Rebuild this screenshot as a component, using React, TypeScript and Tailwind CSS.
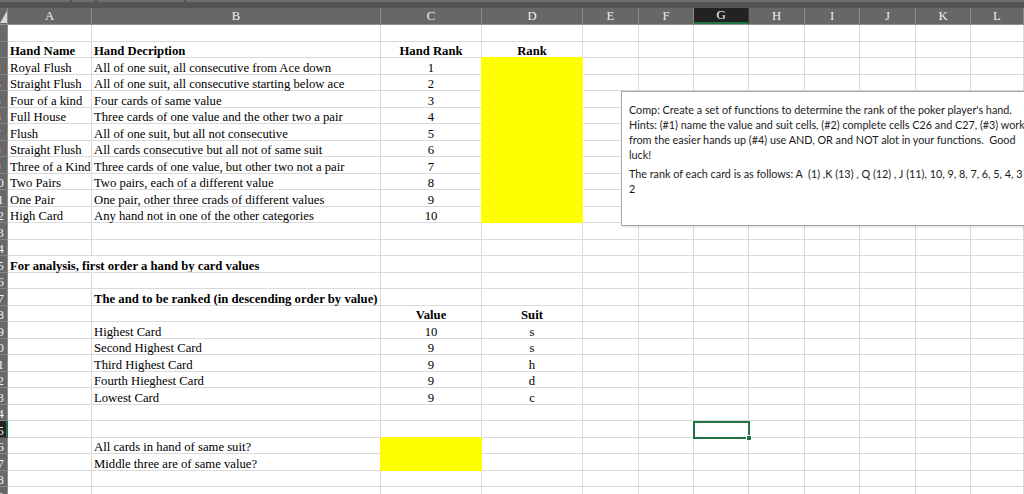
import React from 'react';

type Cell = { t?: string; b?: boolean; c?: boolean; y?: boolean; o?: boolean };

const letters = ['A', 'B', 'C', 'D', 'E', 'F', 'G', 'H', 'I', 'J', 'K', 'L'];
const colW = [
  'w-[84px]',
  'w-[289px]',
  'w-[101px]',
  'w-[101px]',
  'w-[56px]',
  'w-[55px]',
  'w-[55px]',
  'w-[56px]',
  'w-[55px]',
  'w-[56px]',
  'w-[55px]',
  'flex-1',
];

const data: Record<number, Record<number, Cell>> = {
  2: {
    0: { t: 'Hand Name', b: true },
    1: { t: 'Hand Decription', b: true },
    2: { t: 'Hand Rank', b: true, c: true },
    3: { t: 'Rank', b: true, c: true },
  },
  3: { 0: { t: 'Royal Flush' }, 1: { t: 'All of one suit, all consecutive from Ace down' }, 2: { t: '1', c: true }, 3: { y: true } },
  4: { 0: { t: 'Straight Flush' }, 1: { t: 'All of one suit, all consecutive starting below ace' }, 2: { t: '2', c: true }, 3: { y: true } },
  5: { 0: { t: 'Four of a kind' }, 1: { t: 'Four cards of same value' }, 2: { t: '3', c: true }, 3: { y: true } },
  6: { 0: { t: 'Full House' }, 1: { t: 'Three cards of one value and the other two a pair' }, 2: { t: '4', c: true }, 3: { y: true } },
  7: { 0: { t: 'Flush' }, 1: { t: 'All of one suit, but all not consecutive' }, 2: { t: '5', c: true }, 3: { y: true } },
  8: { 0: { t: 'Straight Flush' }, 1: { t: 'All cards consecutive but all not of same suit' }, 2: { t: '6', c: true }, 3: { y: true } },
  9: { 0: { t: 'Three of a Kind' }, 1: { t: 'Three cards of one value, but other two not a pair' }, 2: { t: '7', c: true }, 3: { y: true } },
  10: { 0: { t: 'Two Pairs' }, 1: { t: 'Two pairs, each of a different value' }, 2: { t: '8', c: true }, 3: { y: true } },
  11: { 0: { t: 'One Pair' }, 1: { t: 'One pair, other three crads of different values' }, 2: { t: '9', c: true }, 3: { y: true } },
  12: { 0: { t: 'High Card' }, 1: { t: 'Any hand not in one of the other categories' }, 2: { t: '10', c: true }, 3: { y: true } },
  15: { 0: { t: 'For analysis, first order a hand by card values', b: true, o: true } },
  17: { 1: { t: 'The and to be ranked (in descending order by value)', b: true } },
  18: { 2: { t: 'Value', b: true, c: true }, 3: { t: 'Suit', b: true, c: true } },
  19: { 1: { t: 'Highest Card' }, 2: { t: '10', c: true }, 3: { t: 's', c: true } },
  20: { 1: { t: 'Second Highest Card' }, 2: { t: '9', c: true }, 3: { t: 's', c: true } },
  21: { 1: { t: 'Third Highest Card' }, 2: { t: '9', c: true }, 3: { t: 'h', c: true } },
  22: { 1: { t: 'Fourth Hieghest Card' }, 2: { t: '9', c: true }, 3: { t: 'd', c: true } },
  23: { 1: { t: 'Lowest Card' }, 2: { t: '9', c: true }, 3: { t: 'c', c: true } },
  26: { 1: { t: 'All cards in hand of same suit?' }, 2: { y: true } },
  27: { 1: { t: 'Middle three are of same value?' }, 2: { y: true } },
};

const rowNums = Array.from({ length: 29 }, (_, i) => i + 1);

function isYellow(r: number, c: number) {
  return !!data[r]?.[c]?.y;
}

function Row({ n }: { n: number }) {
  const cells = data[n] || {};
  const h = n % 2 === 1 ? 'h-[17px]' : 'h-[16px]';
  const sel = n === 25;
  return (
    <div className={`flex shrink-0 ${h}`}>
      <div
        className={`flex w-[8px] shrink-0 items-end overflow-hidden border-r border-b ${
          sel ? 'border-r-2 border-r-[#217346] border-b-[#4a4a4a] bg-[#232323]' : 'border-r-[#8c8c8c] border-b-[#858585] bg-[#686868]'
        }`}
      >
        <div className="ml-[-15.5px] w-[26px] shrink-0 text-center text-[12.7px] leading-[12px] text-[#f2f2f2]">{n}</div>
      </div>
      {letters.map((_, i) => {
        const cell = cells[i];
        const yellow = isYellow(n, i);
        const rightYellow = yellow || isYellow(n, i + 1);
        const belowYellow = yellow || isYellow(n + 1, i);
        return (
          <div
            key={i}
            className={`flex shrink-0 items-end border-r border-b ${colW[i]} ${yellow ? 'bg-[#ffff00]' : ''} ${
              rightYellow ? 'border-r-[#ffff00]' : cell?.o ? 'border-r-transparent' : 'border-r-[#dadada]'
            } ${belowYellow ? 'border-b-[#ffff00]' : 'border-b-[#dadada]'} ${cell?.c ? 'justify-center' : 'pl-[2px]'}`}
          >
            {cell?.t ? (
              <span className={`whitespace-nowrap text-[12.7px] leading-[12px] text-black ${cell.b ? 'font-bold' : ''}`}>{cell.t}</span>
            ) : null}
          </div>
        );
      })}
    </div>
  );
}

export default function App() {
  return (
    <div className="relative h-[494px] w-[1024px] overflow-hidden bg-white font-['Liberation_Serif',serif]">
      <div className="flex h-full flex-col">
        {/* top strip */}
        <div className="flex h-[8px] shrink-0 flex-col bg-[#545454]">
          <div className="flex h-[2px] gap-[2px]">
            <div className="w-[70px] bg-[#6e6e6e]" />
            <div className="w-[23px] bg-[#6e6e6e]" />
            <div className="w-[87px] bg-[#6e6e6e]" />
            <div className="flex-1 bg-[#6e6e6e]" />
          </div>
        </div>
        {/* column headers */}
        <div className="flex h-[17px] shrink-0 border-b border-b-[#8f8f8f] bg-[#676767]">
          <div className="relative w-[8px] shrink-0 border-r border-r-[#8c8c8c]">
            <svg className="absolute left-0 top-[3px]" width="7" height="12" viewBox="0 0 7 12">
              <polygon points="7,0 7,12 0,12" fill="#d9d9d9" />
            </svg>
          </div>
          {letters.map((l, i) => (
            <div
              key={l}
              className={`flex shrink-0 items-center justify-center border-r text-[12.7px] leading-none ${colW[i]} ${
                l === 'G' ? 'border-b-2 border-r-[#3a3a3a] border-b-[#217346] bg-[#222222] text-white' : 'border-r-[#8c8c8c] text-[#f0f0f0]'
              }`}
            >
              {l}
            </div>
          ))}
        </div>
        {rowNums.map((n) => (
          <Row key={n} n={n} />
        ))}
      </div>

      {/* comment box */}
      <div className="absolute left-[621px] top-[91px] h-[135px] w-[420px] border border-[#a6a6a6] bg-white pl-[7px] pt-[10px] font-['Lato',sans-serif] text-[10.8px] leading-[15px] text-[#1a1a1a] shadow-[1px_1px_2px_rgba(0,0,0,0.15)]">
        <div className="whitespace-pre">Comp: Create a set of functions to determine the rank of the poker player's hand.</div>
        <div className="whitespace-pre">Hints: (#1) name the value and suit cells, (#2) complete cells C26 and C27, (#3) work</div>
        <div className="whitespace-pre">from the easier hands up (#4) use AND, OR and NOT alot in your functions.  Good</div>
        <div className="whitespace-pre">luck!</div>
        <div className="h-[4px]" />
        <div className="whitespace-pre">The rank of each card is as follows: A  (1) ,K (13) , Q (12) , J (11), 10, 9, 8, 7, 6, 5, 4, 3</div>
        <div className="whitespace-pre">2</div>
      </div>

      {/* selected cell G25 */}
      <div className="absolute left-[693px] top-[421px] h-[18px] w-[57px] border-2 border-[#217346]">
        <div className="absolute bottom-[-4px] right-[-4px] h-[6px] w-[6px] border border-white bg-[#217346]" />
      </div>
    </div>
  );
}
